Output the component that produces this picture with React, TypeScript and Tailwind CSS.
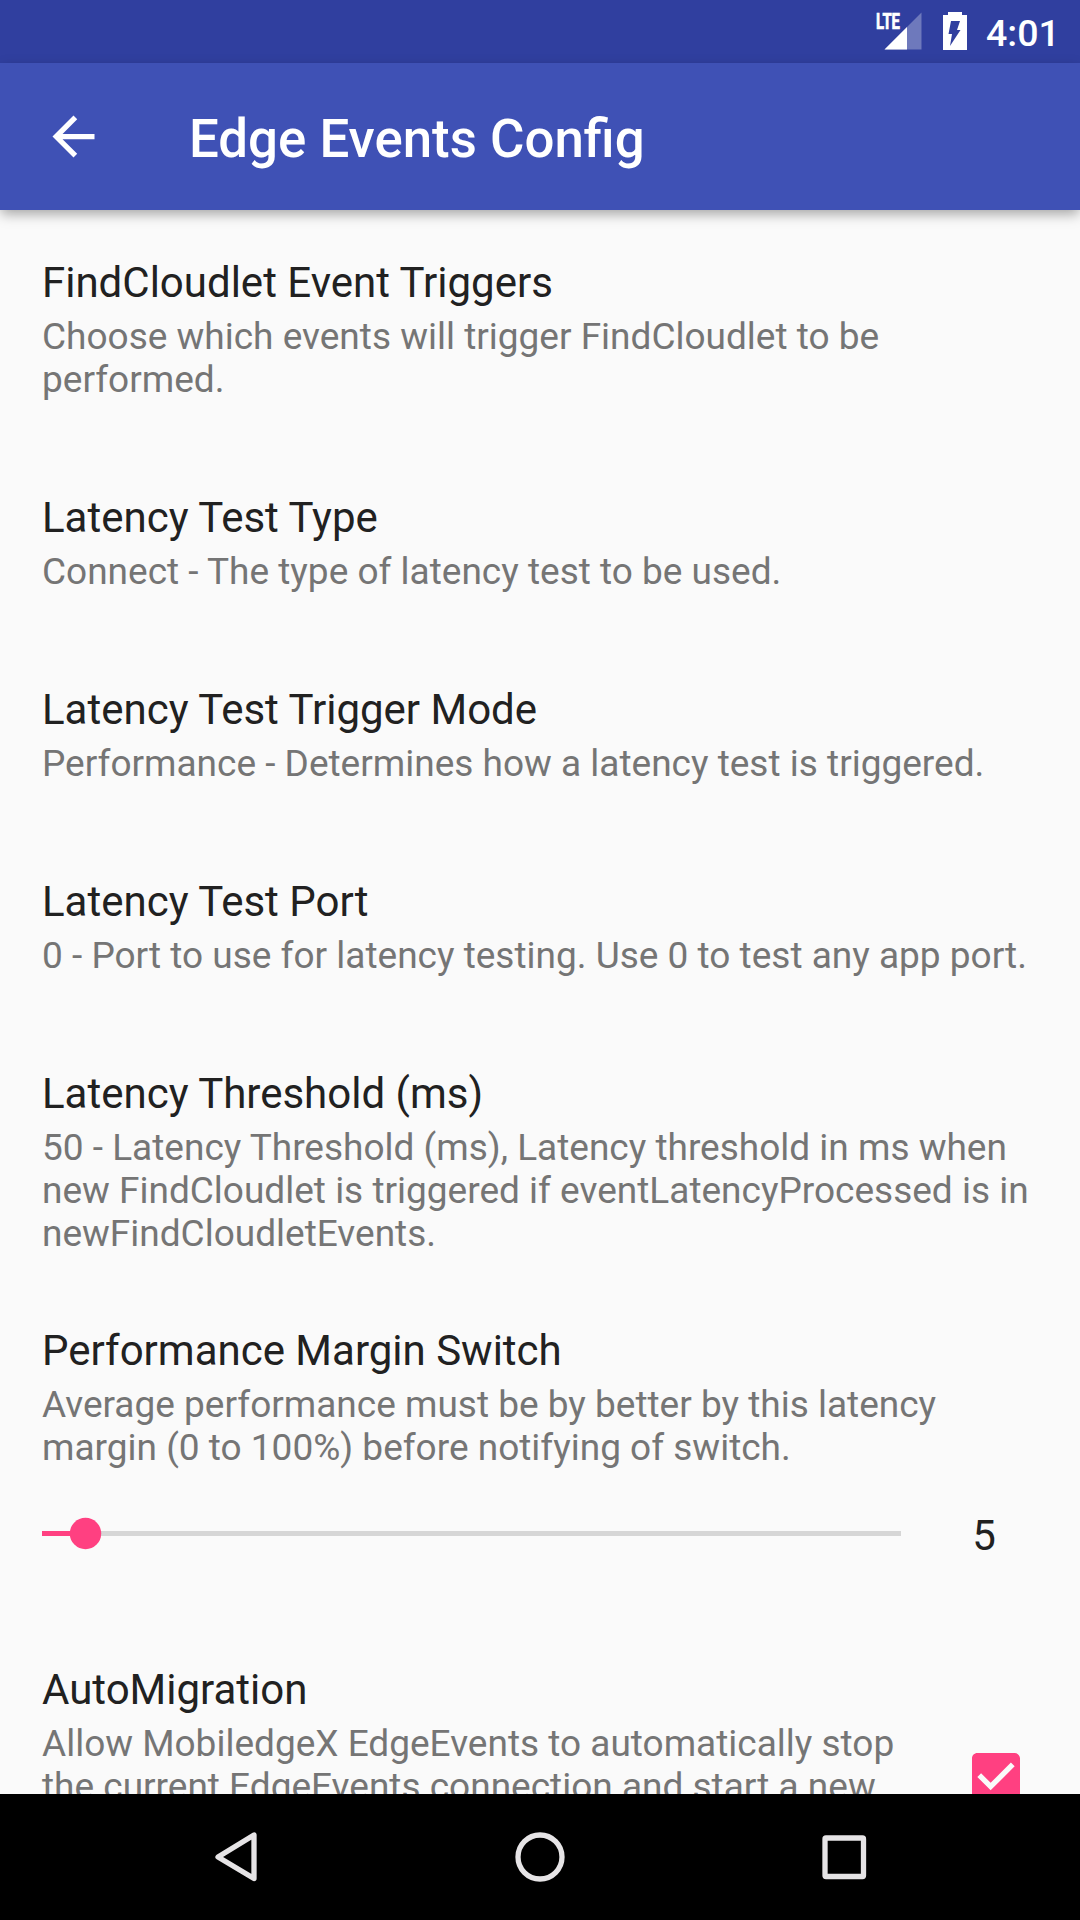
import React from "react";

function Pref({ title, lines, className }: { title: string; lines: string[]; className: string }) {
  return (
    <section className={`pl-[42px] ${className}`}>
      <h2 className="h-[60px] text-[42px] leading-[56px] text-[#212121] whitespace-nowrap">{title}</h2>
      <div className="text-[37px] leading-[43px] text-[#757575]">
        {lines.map((l) => (
          <p key={l} className="whitespace-nowrap">{l}</p>
        ))}
      </div>
    </section>
  );
}

export default function App() {
  return (
    <div className="flex h-[1920px] w-[1080px] flex-col overflow-hidden bg-[#fafafa] font-['Roboto',sans-serif]">
      <div className="flex h-[63px] shrink-0 items-center justify-end bg-[#303f9f] text-white">
        <svg width="116" height="63" viewBox="870 0 116 63" fill="#fff">
          <path d="M921.5 12.5v37h-37z" opacity=".3" />
          <path d="M907 27v22.500h-22.500z" />
          <path d="M875 12h26v15l-4 4h-22z" fill="#303f9f" />
          <text x="876" y="29" fontSize="21.500" fontWeight="700" textLength="24" lengthAdjust="spacingAndGlyphs" stroke="#fff" strokeWidth="0.7">LTE</text>
          <path d="M948 12h14v3h5v35h-24V15h5z" />
          <path d="M951 21h9l-3 9h3.500l-10.500 16 2-12h-3.500z" fill="#303f9f" />
        </svg>
        <span className="w-[94px] pt-[2px] text-[37.5px] font-medium leading-[44px]">4:01</span>
      </div>
      <header className="z-10 flex h-[147px] shrink-0 items-center bg-[#3f51b5] text-white shadow-[0_5px_12px_-1px_rgba(0,0,0,0.35)]">
        <svg className="ml-[42px]" width="63" height="63" viewBox="0 0 24 24" fill="#fff">
          <path d="M20 11H7.83l5.59-5.59L12 4l-8 8 8 8 1.41-1.41L7.83 13H20v-2z" />
        </svg>
        <h1 className="ml-[84px] pt-[6px] text-[52.8px] font-medium">Edge Events Config</h1>
      </header>
      <main className="h-[1584px] overflow-hidden">
        <Pref className="h-[235px] pt-[45px]" title="FindCloudlet Event Triggers" lines={["Choose which events will trigger FindCloudlet to be", "performed."]} />
        <Pref className="h-[192px] pt-[45px]" title="Latency Test Type" lines={["Connect - The type of latency test to be used."]} />
        <Pref className="h-[192px] pt-[45px]" title="Latency Test Trigger Mode" lines={["Performance - Determines how a latency test is triggered."]} />
        <Pref className="h-[192px] pt-[45px]" title="Latency Test Port" lines={["0 - Port to use for latency testing. Use 0 to test any app port."]} />
        <Pref className="h-[257px] pt-[45px]" title="Latency Threshold (ms)" lines={["50 - Latency Threshold (ms), Latency threshold in ms when", "new FindCloudlet is triggered if eventLatencyProcessed is in", "newFindCloudletEvents."]} />
        <Pref className="h-[214px] pt-[45px]" title="Performance Margin Switch" lines={["Average performance must be by better by this latency", "margin (0 to 100%) before notifying of switch."]} />
        <div className="flex h-[125px] items-start pl-[42px] pt-[21px]">
          <svg width="859" height="41" viewBox="0 0 859 41">
            <path d="M0 18h859v5H0z" fill="#d6d6d6" />
            <path d="M0 18h43v5H0z" fill="#ff4081" />
            <circle cx="43.500" cy="20.500" r="15.700" fill="#ff4081" />
          </svg>
          <span className="w-[166px] text-center text-[42px] leading-[46px] text-[#212121]">5</span>
        </div>
        <div className="flex">
          <Pref className="w-[972px] pt-[45px]" title="AutoMigration" lines={["Allow MobiledgeX EdgeEvents to automatically stop", "the current EdgeEvents connection and start a new"]} />
          <svg className="mt-[136px]" width="48" height="48" viewBox="3 3 18 18">
            <path fill="#ff4081" d="M19 3H5c-1.11 0-2 .9-2 2v14c0 1.1.89 2 2 2h14c1.11 0 2-.9 2-2V5c0-1.1-.89-2-2-2zm-9 14l-5-5 1.41-1.41L10 14.17l7.59-7.59L19 8l-9 9z" />
          </svg>
        </div>
      </main>
      <nav className="h-[126px] shrink-0 bg-black">
        <svg width="1080" height="126" viewBox="0 1794 1080 126" fill="none" stroke="#e6e4e6" strokeWidth="5.300" strokeLinejoin="round">
          <path d="M254 1835v43.500l-36-21.500z" />
          <circle cx="540" cy="1857" r="22" />
          <rect x="825" y="1838" width="38.500" height="38.500" rx="1" />
        </svg>
      </nav>
    </div>
  );
}
